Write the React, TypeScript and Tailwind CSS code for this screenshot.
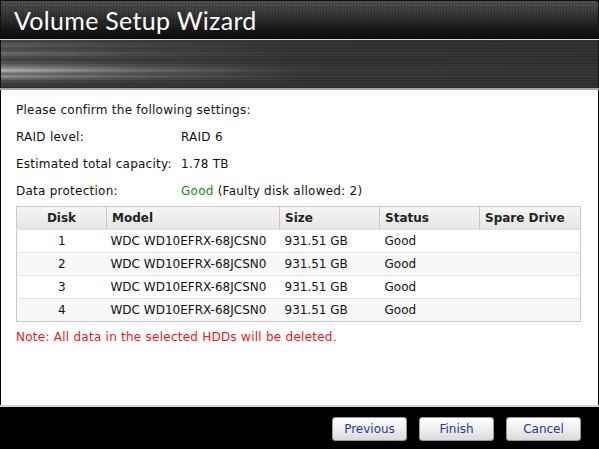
import React from "react";

const disks = [
  { id: 1, model: "WDC WD10EFRX-68JCSN0", size: "931.51 GB", status: "Good" },
  { id: 2, model: "WDC WD10EFRX-68JCSN0", size: "931.51 GB", status: "Good" },
  { id: 3, model: "WDC WD10EFRX-68JCSN0", size: "931.51 GB", status: "Good" },
  { id: 4, model: "WDC WD10EFRX-68JCSN0", size: "931.51 GB", status: "Good" },
];

function WizardButton({ label }: { label: string }) {
  return (
    <button className="w-[75px] h-[24px] rounded-[3px] border border-[#9a9a9a] bg-[linear-gradient(to_bottom,#ffffff,#f1f1f1_45%,#d9d9d9)] text-[12px] text-[#2a35a6] font-['DejaVu_Sans',sans-serif]">
      {label}
    </button>
  );
}

export default function App() {
  return (
    <div className="w-[599px] h-[449px] flex flex-col bg-black overflow-hidden font-['DejaVu_Sans',sans-serif] text-[12px] text-[#111]">
      {/* title bar */}
      <div className="h-[39px] shrink-0 flex items-center pl-[13px] border-t border-x border-[#111] rounded-tr-[3px] bg-[repeating-conic-gradient(rgba(0,0,0,0.18)_0_25%,transparent_0_50%),linear-gradient(to_bottom,#575757,#3a3a3a_35%,#161616_80%,#0c0c0c)] bg-[length:3px_3px,100%_100%]">
        <span className="text-white text-[25px] leading-none tracking-[0.3px] font-['Lato',sans-serif] pt-[1px]">
          Volume Setup Wizard
        </span>
      </div>
      <div className="h-px shrink-0 bg-[#d9d9d9]" />
      {/* streak band */}
      <div className="h-[48px] shrink-0 border-x border-[#111] bg-[repeating-linear-gradient(to_bottom,rgba(255,255,255,0.05)_0_1px,transparent_1px_3px),linear-gradient(to_right,rgba(44,44,44,0.05),rgba(44,44,44,0.55)_22%,rgba(44,44,44,0.92)_50%,rgba(44,44,44,0.97)),linear-gradient(to_bottom,#3a3a3a,#5c5c5c_10%,#484848_20%,#6c6c6c_28%,#3e3e3e_40%,#575757_50%,#8a8a8a_58%,#bcbcbc_64%,#6a6a6a_70%,#929292_76%,#474747_85%,#2e2e2e)]" />
      <div className="h-[2px] shrink-0 bg-[#a6a6a6]" />

      {/* body */}
      <div className="h-[315px] shrink-0 bg-white border-x border-black pl-[15px] pr-[17px] pt-[6px]">
        <div className="tracking-[0.25px]">
          <div className="h-[27px] flex items-center">Please confirm the following settings:</div>
          <div className="h-[27px] flex items-center">
            <span className="w-[165px]">RAID level:</span>
            <span>RAID 6</span>
          </div>
          <div className="h-[27px] flex items-center">
            <span className="w-[165px]">Estimated total capacity:</span>
            <span>1.78 TB</span>
          </div>
          <div className="h-[27px] flex items-center">
            <span className="w-[165px]">Data protection:</span>
            <span>
              <span className="text-[#138a13]">Good</span> (Faulty disk allowed: 2)
            </span>
          </div>
        </div>

        <table className="mt-[2px] w-[564px] table-fixed border-collapse border border-[#c9c9c9]">
          <colgroup>
            <col className="w-[90px]" />
            <col className="w-[173px]" />
            <col className="w-[100px]" />
            <col className="w-[100px]" />
            <col className="w-[101px]" />
          </colgroup>
          <thead>
            <tr className="h-[23px] bg-[linear-gradient(to_bottom,#f6f6f6,#e4e4e4)] text-[#222]">
              <th className="font-bold text-center border-r border-[#c9c9c9]">Disk</th>
              <th className="font-bold text-left pl-[5px] border-r border-[#c9c9c9]">Model</th>
              <th className="font-bold text-left pl-[5px] border-r border-[#c9c9c9]">Size</th>
              <th className="font-bold text-left pl-[5px] border-r border-[#c9c9c9]">Status</th>
              <th className="font-bold text-left pl-[5px]">Spare Drive</th>
            </tr>
          </thead>
          <tbody>
            {disks.map((d, i) => (
              <tr
                key={d.id}
                className={`h-[23px] border-t border-[#e2e2e2] ${i % 2 === 1 ? "bg-[#f8f8f8]" : "bg-white"}`}
              >
                <td className="text-center">{d.id}</td>
                <td className="pl-[4px]">{d.model}</td>
                <td className="pl-[5px]">{d.size}</td>
                <td className="pl-[5px]">{d.status}</td>
                <td />
              </tr>
            ))}
          </tbody>
        </table>

        <div className="mt-[6px] tracking-[0.25px] text-[#f01515]">Note: All data in the selected HDDs will be deleted.</div>
      </div>

      <div className="h-[2px] shrink-0 bg-[#d3d3d3]" />
      {/* footer */}
      <div className="flex-1 flex justify-end items-start gap-[12px] pt-[10px] pr-[18px]">
        <WizardButton label="Previous" />
        <WizardButton label="Finish" />
        <WizardButton label="Cancel" />
      </div>
    </div>
  );
}
